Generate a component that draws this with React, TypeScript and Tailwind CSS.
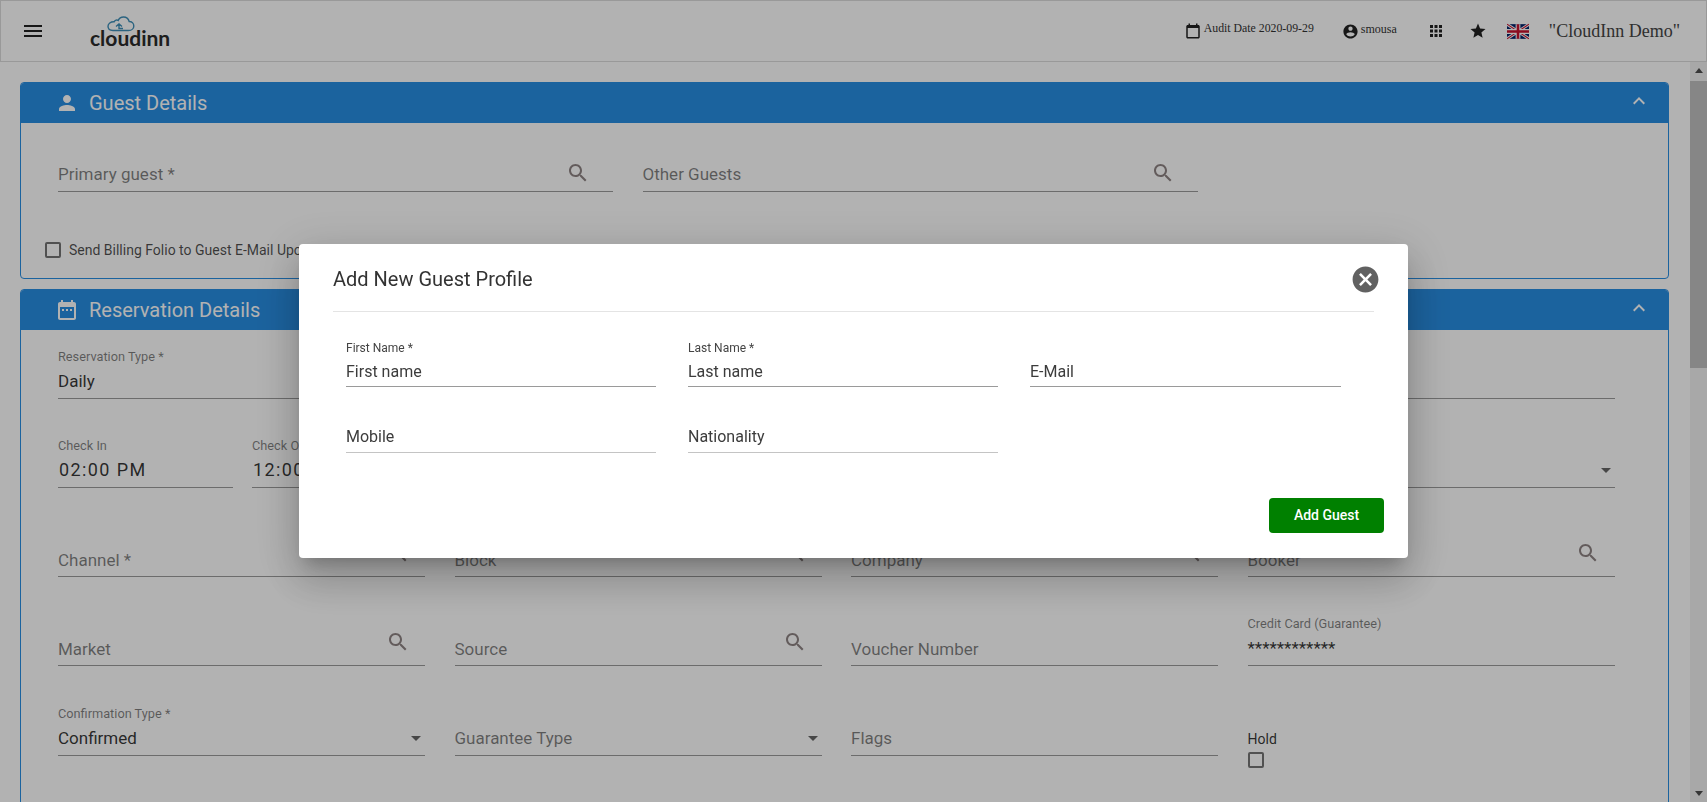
import type { ReactNode } from "react";

const paths = {
  menu: "M3 18h18v-2H3v2zm0-5h18v-2H3v2zm0-7v2h18V6H3z",
  search:
    "M15.5 14h-.79l-.28-.27C15.41 12.59 16 11.11 16 9.5 16 5.91 13.09 3 9.5 3S3 5.91 3 9.5 5.91 16 9.5 16c1.61 0 3.09-.59 4.23-1.57l.27.28v.79l5 4.99L20.49 19l-4.99-5zm-6 0C7.01 14 5 11.99 5 9.5S7.01 5 9.5 5 14 7.01 14 9.5 11.99 14 9.5 14z",
  person:
    "M12 12c2.21 0 4-1.79 4-4s-1.79-4-4-4-4 1.79-4 4 1.79 4 4 4zm0 2c-2.67 0-8 1.34-8 4v2h16v-2c0-2.66-5.33-4-8-4z",
  event:
    "M9 11H7v2h2v-2zm4 0h-2v2h2v-2zm4 0h-2v2h2v-2zm2-7h-1V2h-2v2H8V2H6v2H5c-1.11 0-1.99.9-1.99 2L3 20c0 1.1.89 2 2 2h14c1.1 0 2-.9 2-2V6c0-1.1-.9-2-2-2zm0 16H5V9h14v11z",
  up: "M12 8l-6 6 1.41 1.41L12 10.83l4.59 4.58L18 14z",
  calendar:
    "M19 4h-1V2h-2v2H8V2H6v2H5c-1.11 0-1.99.9-1.99 2L3 20c0 1.1.89 2 2 2h14c1.1 0 2-.9 2-2V6c0-1.1-.9-2-2-2zm0 16H5V8h14v12z",
  account:
    "M12 2C6.48 2 2 6.48 2 12s4.48 10 10 10 10-4.48 10-10S17.52 2 12 2zm0 3c1.66 0 3 1.34 3 3s-1.34 3-3 3-3-1.34-3-3 1.34-3 3-3zm0 14.2c-2.5 0-4.71-1.28-6-3.22.03-1.99 4-3.08 6-3.08 1.99 0 5.97 1.09 6 3.08-1.29 1.94-3.5 3.22-6 3.22z",
  apps: "M4 8h4V4H4v4zm6 12h4v-4h-4v4zm-6 0h4v-4H4v4zm0-6h4v-4H4v4zm6 0h4v-4h-4v4zm6-10v4h4V4h-4zm-6 4h4V4h-4v4zm6 6h4v-4h-4v4zm0 6h4v-4h-4v4z",
  star: "M12 17.27L18.18 21l-1.64-6.88L22 9.24l-7.19-.61L12 2 9.19 8.63 2 9.24l5.46 4.73L5.82 21z",
  cancel:
    "M12 2C6.47 2 2 6.47 2 12s4.47 10 10 10 10-4.47 10-10S17.53 2 12 2zm5 13.59L15.59 17 12 13.41 8.41 17 7 15.59 10.59 12 7 8.41 8.41 7 12 10.59 15.59 7 17 8.41 13.41 12 17 15.59z",
  drop: "M7 10l5 5 5-5z",
};

const Icon = ({ d, className }: { d: string; className: string }) => (
  <svg viewBox="0 0 24 24" fill="currentColor" className={className}>
    <path d={d} />
  </svg>
);

const Logo = () => (
  <div className="ml-[45px] flex w-[80px] flex-col">
    <svg viewBox="0 0 28 16" className="ml-[17px] h-[16px] w-[28px] text-[#3f8fb8]" fill="none" stroke="currentColor" strokeWidth="1.4">
      <path d="M6 14.5h15.5c3.4 0 5.3-2.2 5.3-4.6 0-2.6-2-4.4-4.6-4.4C21.4 2.8 19.2 1 16.6 1c-2.6 0-4.6 1.4-5.4 3.4C9.900 3.700 8 4.100 7.200 5.800 3.600 5.600 1 7.600 1 10.300c0 2.400 2 4.200 5 4.200z" />
      <path d="M9 10.500l3-2.500 3 2.500M12 8v4.500h4" />
    </svg>
    <span className="mt-[-3px] text-[21px] leading-[17px] font-[Lato,sans-serif] font-bold text-[#2b2b2b]">cloudinn</span>
  </div>
);

const Flag = () => (
  <svg viewBox="0 0 60 40" className="h-[17px] w-[22px]">
    <rect width="60" height="40" fill="#012169" />
    <path d="M0 0L60 40M60 0L0 40" stroke="#fff" strokeWidth="8" />
    <path d="M0 0L60 40M60 0L0 40" stroke="#c8102e" strokeWidth="3" />
    <path d="M30 0V40M0 20H60" stroke="#fff" strokeWidth="13" />
    <path d="M30 0V40M0 20H60" stroke="#c8102e" strokeWidth="7" />
  </svg>
);

type FieldProps = {
  label?: string;
  value?: string;
  placeholder?: string;
  icon?: "search" | "drop";
  time?: boolean;
  high?: boolean;
  iconClass?: string;
  className?: string;
};

// underlined text field on the page behind the dialog
const Field = ({ label, value, placeholder, icon, time, high, iconClass, className }: FieldProps) => (
  <div className={`relative flex h-[48px] flex-col justify-end border-b border-[#9b9b9b] ${className ?? ""}`}>
    {label && <div className="absolute top-[-2px] left-0 text-[12.75px] leading-[16px] text-black/50">{label}</div>}
    {value && (
      <div className={`pb-[5px] leading-[24px] text-black/80 ${time ? "pl-[1px] text-[18px] tracking-[1.4px]" : "text-[17px]"}`}>
        {value}
      </div>
    )}
    {placeholder && (
      <div className={`text-[17px] leading-[24px] text-black/50 ${high ? "pb-[5px]" : "pb-[4px]"}`}>{placeholder}</div>
    )}
    {icon === "search" && (
      <Icon
        d={paths.search}
        className={`absolute h-[24px] w-[24px] text-[#8f8484] ${iconClass ?? "right-[15px] bottom-[11px]"}`}
      />
    )}
    {icon === "drop" && <Icon d={paths.drop} className="absolute right-[-3px] bottom-[5px] h-[24px] w-[24px] text-black/60" />}
  </div>
);

const Section = ({ icon, title, children }: { icon: string; title: string; children: ReactNode }) => (
  <section className="shrink-0 rounded-[4px] border border-[#288ee3]">
    <div className="flex h-[40px] items-center rounded-t-[3px] bg-[#288ee3] pr-[17px] pl-[34px] text-white">
      <Icon d={icon} className="h-[24px] w-[24px]" />
      <h2 className="ml-[10px] text-[20px] leading-[24px]">{title}</h2>
      <Icon d={paths.up} className="mt-[-5px] ml-auto h-[24px] w-[24px]" />
    </div>
    {children}
  </section>
);

const Checkbox = () => <div className="h-[16px] w-[16px] rounded-[2px] border-2 border-[#757575]" />;

const ModalField = ({ label, text, light }: { label?: string; text: string; light?: boolean }) => (
  <div className={`relative flex h-[46px] flex-col justify-end border-b ${light ? "border-[#c4c4c4]" : "border-[#9a9a9a]"}`}>
    {label && <div className="absolute top-[0px] left-0 text-[12px] leading-[14px] text-[#444]">{label}</div>}
    <div className={`text-[16px] leading-[24px] text-[#3c3c3c] ${light ? "pb-[3px]" : "pb-[2px]"}`}>{text}</div>
  </div>
);

const App = () => {
  return (
    <div className="flex h-screen flex-col overflow-hidden bg-white font-[Roboto,sans-serif]">
      <header className="flex h-[62px] shrink-0 items-center border border-[#dcdcdc] bg-white pl-[20px] text-[#222]">
        <Icon d={paths.menu} className="h-[24px] w-[24px]" />
        <Logo />
        <div className="ml-auto flex items-center pr-[26px] font-['Liberation_Serif',serif]">
          <Icon d={paths.calendar} className="h-[18px] w-[18px]" />
          <span className="mt-[-4px] ml-[2px] text-[11.8px] text-[#333]">Audit Date 2020-09-29</span>
          <Icon d={paths.account} className="ml-[28px] h-[17px] w-[17px]" />
          <span className="mt-[-4px] ml-[2px] text-[12px] text-[#333]">smousa</span>
          <Icon d={paths.apps} className="ml-[30px] h-[18px] w-[18px]" />
          <Icon d={paths.star} className="ml-[24px] h-[18px] w-[18px]" />
          <div className="ml-[20px]">
            <Flag />
          </div>
          <span className="ml-[20px] text-[18px] text-[#444]">"CloudInn Demo"</span>
        </div>
      </header>

      <div className="flex min-h-0 flex-1">
        <main className="flex min-w-0 flex-1 flex-col gap-[10px] overflow-hidden pt-[20px] pr-[21px] pl-[20px]">
          <Section icon={paths.person} title="Guest Details">
            <div className="h-[155px] pt-[21px] pl-[37px]">
              <div className="flex gap-[29.5px]">
                <Field placeholder="Primary guest *" high icon="search" iconClass="right-[23px] bottom-[6px]" className="w-[555px]" />
                <Field placeholder="Other Guests" high icon="search" iconClass="right-[23px] bottom-[6px]" className="w-[555px]" />
              </div>
              <label className="mt-[50px] ml-[-13px] flex items-center gap-[8px] text-[14px] leading-[16px] text-black/70">
                <Checkbox />
                Send Billing Folio to Guest E-Mail Upon Check Out
              </label>
            </div>
          </Section>

          <Section icon={paths.event} title="Reservation Details">
            <div className="grid grid-cols-[367px_367px_367px_367px] gap-x-[29.5px] gap-y-[41px] pt-[21px] pb-[120px] pl-[37px]">
              <Field label="Reservation Type *" value="Daily" className="col-span-2" />
              <Field placeholder="Nights" />
              <Field placeholder="Rate Code" />
              <div className="flex gap-[19px]">
                <Field label="Check In" value="02:00 PM" time className="w-[175px]" />
                <Field label="Check Out" value="12:00 PM" time className="w-[173px]" />
              </div>
              <Field placeholder="Adults" />
              <Field placeholder="Children" />
              <Field icon="drop" />
              <Field placeholder="Channel *" icon="search" />
              <Field placeholder="Block" icon="search" />
              <Field placeholder="Company" icon="search" />
              <Field placeholder="Booker" icon="search" />
              <Field placeholder="Market" icon="search" />
              <Field placeholder="Source" icon="search" />
              <Field placeholder="Voucher Number" />
              <Field label="Credit Card (Guarantee)" value="************" />
              <Field label="Confirmation Type *" value="Confirmed" icon="drop" className="mt-[1px]" />
              <Field placeholder="Guarantee Type" high icon="drop" className="mt-[1px]" />
              <Field placeholder="Flags" high className="mt-[1px]" />
              <div className="text-[14px] leading-[16px] text-black/80">
                <div className="mt-[24px] mb-[5px]">Hold</div>
                <Checkbox />
              </div>
            </div>
          </Section>
        </main>

        <div className="flex w-[17px] shrink-0 flex-col bg-[#f1f1f1]">
          <div className="flex h-[17px] items-center justify-center">
            <div className="h-0 w-0 border-x-[4px] border-b-[5px] border-x-transparent border-b-[#505050]" />
          </div>
          <div className="mt-[2px] h-[287px] bg-[#c1c1c1]" />
          <div className="mt-auto flex h-[17px] items-center justify-center">
            <div className="h-0 w-0 border-x-[4px] border-t-[5px] border-x-transparent border-t-[#505050]" />
          </div>
        </div>
      </div>

      <div className="fixed inset-0 flex justify-center bg-black/30 pt-[244px]">
        <div className="h-[314px] w-[1109px] rounded-[4px] bg-white shadow-[0_11px_15px_-7px_rgba(0,0,0,0.2),0_24px_38px_3px_rgba(0,0,0,0.14),0_9px_46px_8px_rgba(0,0,0,0.12)]">
          <div className="mx-[34px] flex h-[68px] items-center justify-between border-b border-[#e4e4e4] pt-[3px]">
            <h1 className="text-[20px] leading-[24px] font-normal text-[#333]">Add New Guest Profile</h1>
            <Icon d={paths.cancel} className="mr-[-7px] h-[31px] w-[31px] text-[#616161]" />
          </div>
          <div className="mt-[29px] grid grid-cols-[310px_310px_311px] gap-x-[32px] gap-y-[20px] pl-[47px]">
            <ModalField label="First Name *" text="First name" />
            <ModalField label="Last Name *" text="Last name" />
            <ModalField text="E-Mail" />
            <ModalField text="Mobile" light />
            <ModalField text="Nationality" light />
          </div>
          <div className="mt-[45px] flex justify-end pr-[24px]">
            <button className="h-[35px] w-[115px] rounded-[4px] bg-[#008000] text-[14px] font-medium text-white">
              Add Guest
            </button>
          </div>
        </div>
      </div>
    </div>
  );
};

export default App;
